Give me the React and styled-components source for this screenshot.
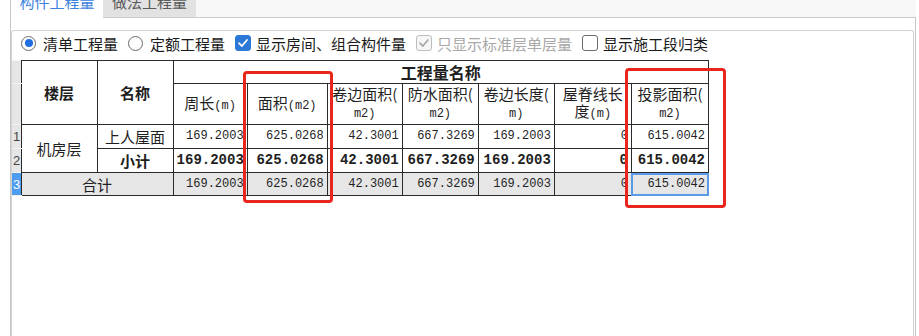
import React from "react";
import styled, { createGlobalStyle } from "styled-components";

const GlobalStyle = createGlobalStyle`
  html, body {
    margin: 0;
    padding: 0;
    background: #fff;
  }
  body {
    font-family: "Noto Sans CJK SC", "Noto Sans", sans-serif;
    color: #1f1f1f;
  }
`;

const Page = styled.div`
  position: relative;
  width: 919px;
  height: 336px;
  overflow: hidden;
  display: flex;
  flex-direction: column;
`;

const TabStrip = styled.div`
  display: flex;
  height: 18px;
  padding: 0 3px 0 10px;
  flex-shrink: 0;
`;

const Tab = styled.div`
  width: 93px;
  height: 27px;
  margin-top: -9px;
  box-sizing: border-box;
  line-height: 22px;
  text-align: center;
  font-size: 15px;
  background: ${(p) => (p.$active ? "#fff" : "#e2e2e2")};
  color: ${(p) => (p.$active ? "#3d82dc" : "#5a5a5a")};
  border-left: ${(p) => (p.$active ? "1px solid #c6c6c6" : "none")};
  border-bottom: ${(p) => (p.$active ? "none" : "1px solid #cbcbcb")};
`;

const TabFiller = styled.div`
  flex: 1;
  background: #f8f8f8;
  border-bottom: 1px solid #cbcbcb;
`;

const Panel = styled.div`
  flex: 1;
  display: flex;
  flex-direction: column;
  margin: 0 3px 0 10px;
  padding: 12px 1px 0 0;
  border-left: 1px solid #c6c6c6;
  border-right: 1px solid #c6c6c6;
`;

const Inner = styled.div`
  flex: 1;
  border: 1px solid #d2d2d2;
  border-bottom: none;
  border-radius: 3px 3px 0 0;
`;

const OptionRow = styled.div`
  display: flex;
  align-items: center;
  height: 24px;
  padding-left: 9px;
  gap: 10px;
  font-size: 15px;
`;

const Option = styled.label`
  display: flex;
  align-items: center;
  gap: ${(p) => (p.$radio ? "7px" : "5px")};
  color: ${(p) => (p.$disabled ? "#a8a8a8" : "#1a1a1a")};
  white-space: nowrap;
`;

const Radio = styled.span`
  width: 15px;
  height: 15px;
  box-sizing: border-box;
  border-radius: 50%;
  border: 1px solid #6a6a6a;
  display: flex;
  align-items: center;
  justify-content: center;
  &::after {
    content: "";
    width: 8px;
    height: 8px;
    border-radius: 50%;
    background: ${(p) => (p.$checked ? "#1f6fe0" : "transparent")};
  }
`;

const Box = styled.span`
  width: 16px;
  height: 16px;
  box-sizing: border-box;
  border-radius: 3px;
  display: flex;
  align-items: center;
  justify-content: center;
  background: ${(p) =>
    p.$disabled ? "#f6f6f6" : p.$checked ? "#2b78d6" : "#fff"};
  border: 1px solid
    ${(p) => (p.$disabled ? "#bdbdbd" : p.$checked ? "#2b78d6" : "#6c6c6c")};
`;

const TableWrap = styled.div`
  margin-top: 5px;
`;

const Grid = styled.table`
  border-collapse: collapse;
  table-layout: fixed;
  width: 697px;
`;

const Gutter = styled.td`
  width: 9px;
  padding: 0 0 0 1px;
  background: ${(p) => (p.$active ? "#4d9cf0" : "#e6e6e6")};
  color: ${(p) => (p.$active ? "#fff" : "#444")};
  font-family: "Liberation Sans", sans-serif;
  font-size: 13px;
  border-top: 1px solid #f2f2f2;
  border-bottom: 1px solid #f2f2f2;
  border-right: 1px solid #2a2a2a;
  vertical-align: middle;
`;

const Head = styled.th`
  border: 1px solid #2a2a2a;
  padding: 0 1px;
  font-size: ${(p) => (p.$big ? "16px" : "15px")};
  font-weight: ${(p) => (p.$bold ? 700 : 400)};
  line-height: 17px;
  text-align: center;
  vertical-align: middle;
  white-space: nowrap;
  overflow: hidden;
`;

const Unit = styled.span`
  font-family: "Liberation Mono", monospace;
  font-size: 12px;
`;

const Cell = styled.td`
  border: 1px solid #2a2a2a;
  padding: 0 3px;
  text-align: ${(p) => (p.$num ? "right" : "center")};
  font-family: ${(p) =>
    p.$num ? '"Liberation Mono", monospace' : '"Noto Sans CJK SC", sans-serif'};
  font-size: ${(p) => (p.$num ? (p.$bold ? "14px" : "12px") : "15px")};
  font-weight: ${(p) => (p.$bold ? 700 : 400)};
  background: ${(p) => (p.$shade ? "#e6e6e6" : "#fff")};
  white-space: nowrap;
  overflow: hidden;
  vertical-align: middle;
  line-height: 17px;
  outline: ${(p) => (p.$selected ? "2px solid #5b9be6" : "none")};
  outline-offset: -2px;
`;

const Row = styled.tr`
  height: ${(p) => p.$h}px;
`;

const Mark = styled.div`
  position: absolute;
  box-sizing: border-box;
  left: ${(p) => p.$x}px;
  top: ${(p) => p.$y}px;
  width: ${(p) => p.$w}px;
  height: ${(p) => p.$h}px;
  border: 3px solid #e8261e;
  border-radius: 4px;
  pointer-events: none;
`;

const Check = ({ color }) => (
  <svg width="12" height="12" viewBox="0 0 12 12">
    <path
      d="M2 6.2 L4.9 9 L10 3"
      fill="none"
      stroke={color}
      strokeWidth="1.8"
      strokeLinecap="round"
      strokeLinejoin="round"
    />
  </svg>
);

const columns = [
  ["周长", "(m)"],
  ["面积", "(m2)"],
  ["卷边面积(", "m2)", true],
  ["防水面积(", "m2)", true],
  ["卷边长度(", "m)", true],
  ["屋脊线长", "度(m)", true],
  ["投影面积(", "m2)", true],
];

const values = ["169.2003", "625.0268", "42.3001", "667.3269", "169.2003", "0", "615.0042"];

const HeadLabel = ({ col }) => {
  const [a, b, wrap] = col;
  if (!wrap) {
    return (
      <>
        {a}
        <Unit>{b}</Unit>
      </>
    );
  }
  if (b.startsWith("度")) {
    return (
      <>
        {a}
        <br />度<Unit>(m)</Unit>
      </>
    );
  }
  return (
    <>
      {a}
      <br />
      <Unit>{b}</Unit>
    </>
  );
};

export default function App() {
  return (
    <Page>
      <GlobalStyle />
      <TabStrip>
        <Tab $active>构件工程量</Tab>
        <Tab>做法工程量</Tab>
        <TabFiller />
      </TabStrip>
      <Panel>
        <Inner>
          <OptionRow>
            <Option $radio>
              <Radio $checked />
              清单工程量
            </Option>
            <Option $radio>
              <Radio />
              定额工程量
            </Option>
            <Option>
              <Box $checked>
                <Check color="#fff" />
              </Box>
              显示房间、组合构件量
            </Option>
            <Option $disabled>
              <Box $disabled>
                <Check color="#a9a9a9" />
              </Box>
              只显示标准层单层量
            </Option>
            <Option>
              <Box />
              显示施工段归类
            </Option>
          </OptionRow>
          <TableWrap>
            <Grid>
              <colgroup>
                <col style={{ width: 9 }} />
                <col style={{ width: 76 }} />
                <col style={{ width: 76 }} />
                <col style={{ width: 74 }} />
                <col style={{ width: 80 }} />
                <col style={{ width: 75 }} />
                <col style={{ width: 76 }} />
                <col style={{ width: 76 }} />
                <col style={{ width: 77 }} />
                <col style={{ width: 77 }} />
              </colgroup>
              <tbody>
                <Row $h={23}>
                  <Gutter />
                  <Head rowSpan={2} $bold>
                    楼层
                  </Head>
                  <Head rowSpan={2} $bold>
                    名称
                  </Head>
                  <Head colSpan={7} $bold $big>
                    工程量名称
                  </Head>
                </Row>
                <Row $h={41}>
                  <Gutter />
                  {columns.map((c) => (
                    <Head key={c[0]}>
                      <HeadLabel col={c} />
                    </Head>
                  ))}
                </Row>
                <Row $h={24}>
                  <Gutter>1</Gutter>
                  <Cell rowSpan={2}>机房层</Cell>
                  <Cell>上人屋面</Cell>
                  {values.map((v, i) => (
                    <Cell key={i} $num>
                      {v}
                    </Cell>
                  ))}
                </Row>
                <Row $h={24}>
                  <Gutter>2</Gutter>
                  <Cell $bold>小计</Cell>
                  {values.map((v, i) => (
                    <Cell key={i} $num $bold>
                      {v}
                    </Cell>
                  ))}
                </Row>
                <Row $h={23}>
                  <Gutter $active>3</Gutter>
                  <Cell colSpan={2} $shade>
                    合计
                  </Cell>
                  {values.map((v, i) => (
                    <Cell key={i} $num $shade $selected={i === values.length - 1}>
                      {v}
                    </Cell>
                  ))}
                </Row>
              </tbody>
            </Grid>
          </TableWrap>
        </Inner>
      </Panel>
      <Mark $x={243} $y={71} $w={90} $h={132} />
      <Mark $x={625} $y={68} $w={101} $h={140} />
    </Page>
  );
}
